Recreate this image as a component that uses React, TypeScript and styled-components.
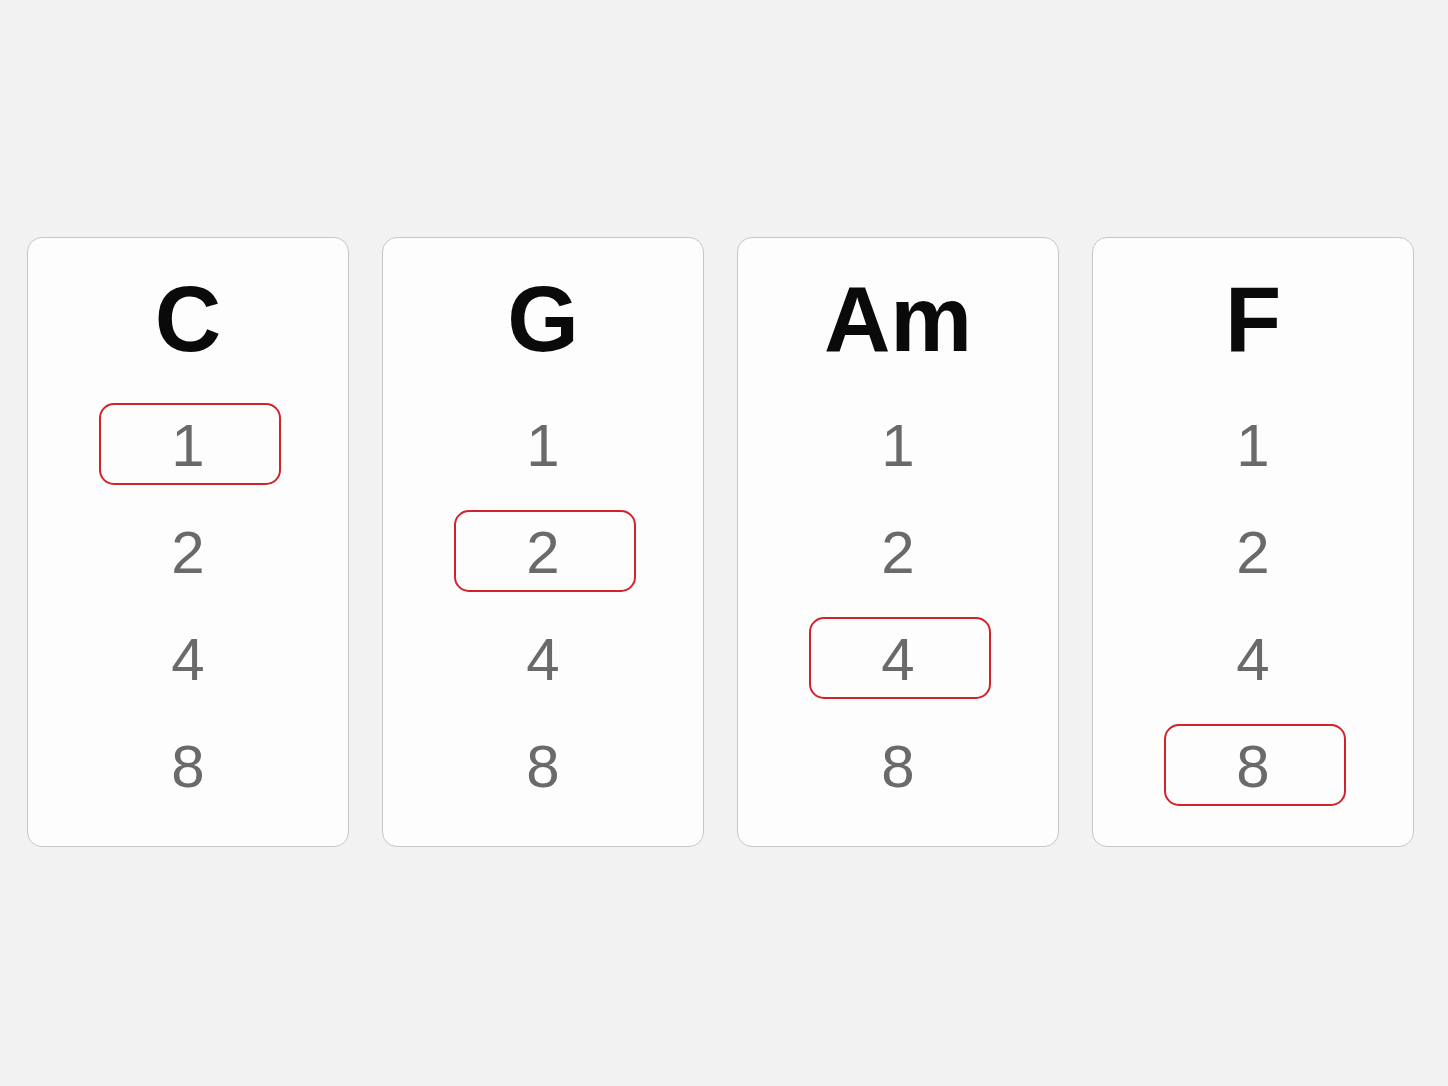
import styled, { createGlobalStyle } from "styled-components";

const GlobalStyle = createGlobalStyle`
  html, body {
    margin: 0;
    padding: 0;
    background: #f2f2f2;
  }
  body {
    font-family: "Liberation Sans", Arial, Helvetica, sans-serif;
  }
`;

const Page = styled.div`
  min-height: 1086px;
  box-sizing: border-box;
  padding: 0 34px 2px 27px;
  display: flex;
  align-items: center;
`;

const CardGrid = styled.div`
  display: grid;
  grid-template-columns: repeat(4, 322px);
  gap: 33px;
`;

const Card = styled.div`
  height: 610px;
  box-sizing: border-box;
  background: #fdfdfd;
  border: 1px solid #c6c6c6;
  border-radius: 15px;
  padding-top: 35px;
  display: flex;
  flex-direction: column;
  align-items: center;
`;

const ChordName = styled.h2`
  margin: 0;
  font-size: 92px;
  line-height: 92px;
  font-weight: 700;
  color: #0a0a0a;
`;

const Subdivisions = styled.div`
  margin-top: 38px;
  display: flex;
  flex-direction: column;
  gap: 25px;
`;

const Subdivision = styled.div<{ $active: boolean }>`
  width: 182px;
  height: 82px;
  margin-left: 3px;
  box-sizing: border-box;
  padding: 3px 3px 0 0;
  border: 2px solid ${({ $active }) => ($active ? "#d2222a" : "transparent")};
  border-radius: 15px;
  display: flex;
  align-items: center;
  justify-content: center;
  font-size: 60px;
  color: #6a6a6a;
`;

const chords = [
  { name: "C", active: 1 },
  { name: "G", active: 2 },
  { name: "Am", active: 4 },
  { name: "F", active: 8 },
];

const values = [1, 2, 4, 8];

export default function App() {
  return (
    <>
      <GlobalStyle />
      <Page>
        <CardGrid>
          {chords.map(chord => (
            <Card key={chord.name}>
              <ChordName>{chord.name}</ChordName>
              <Subdivisions>
                {values.map(v => (
                  <Subdivision key={v} $active={v === chord.active}>
                    {v}
                  </Subdivision>
                ))}
              </Subdivisions>
            </Card>
          ))}
        </CardGrid>
      </Page>
    </>
  );
}
